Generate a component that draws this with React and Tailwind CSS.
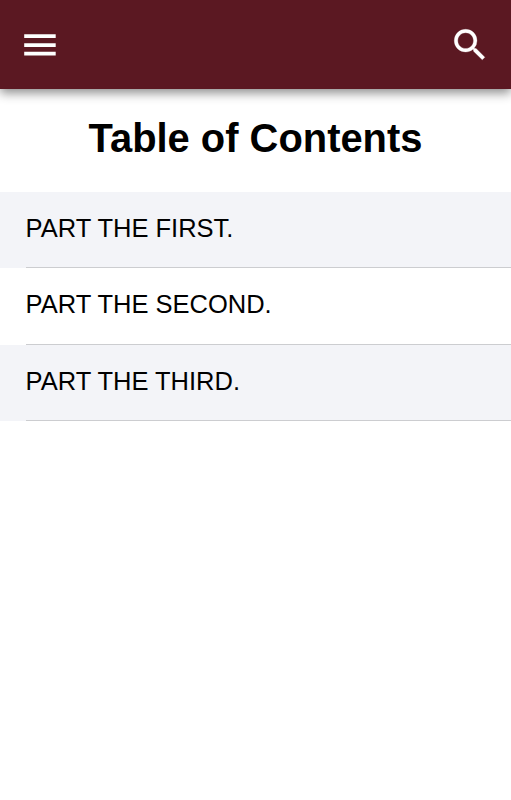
const parts = ["PART THE FIRST.", "PART THE SECOND.", "PART THE THIRD."];

function Header() {
  return (
    <header className="flex h-[89px] items-center justify-between bg-[#5b1822] pr-[20.5px] pl-[19px] text-white shadow-[0_4px_10px_rgba(0,0,0,0.45)]">
      <button aria-label="Menu">
        <svg viewBox="0 0 42 42" className="size-[42px]" fill="currentColor">
          <path d="M5.2 10.3h31.5v3.8H5.2zM5.2 19.2h31.5V23H5.2zM5.2 27.8h31.5v3.8H5.2z" />
        </svg>
      </button>
      <button aria-label="Search">
        <svg
          viewBox="0 0 24 24"
          className="size-[42px]"
          fill="currentColor"
          stroke="currentColor"
          strokeWidth="0.15"
        >
          <path d="M15.5 14h-.79l-.28-.27A6.471 6.471 0 0 0 16 9.5 6.5 6.5 0 1 0 9.5 16c1.61 0 3.09-.59 4.23-1.57l.27.28v.79l5 4.99L20.49 19l-4.99-5zm-6 0C7.01 14 5 11.99 5 9.5S7.01 5 9.5 5 14 7.01 14 9.5 11.99 14 9.5 14z" />
        </svg>
      </button>
    </header>
  );
}

function App() {
  return (
    <div className="min-h-screen bg-white font-['Liberation_Sans',Arial,sans-serif] text-black">
      <Header />
      <main>
        <h1 className="flex h-[102.6px] items-center justify-center pb-[3px] text-[39.9px] font-bold leading-none">
          Table of Contents
        </h1>
        <ul>
          {parts.map((part) => (
            <li key={part} className="h-[76.6px] pl-[25.6px] odd:bg-[#f3f4f8]">
              <a className="flex h-full items-center border-b border-[#cccdd0] pb-[2px] text-[25.5px] leading-none">
                {part}
              </a>
            </li>
          ))}
        </ul>
      </main>
    </div>
  );
}

export default App;
